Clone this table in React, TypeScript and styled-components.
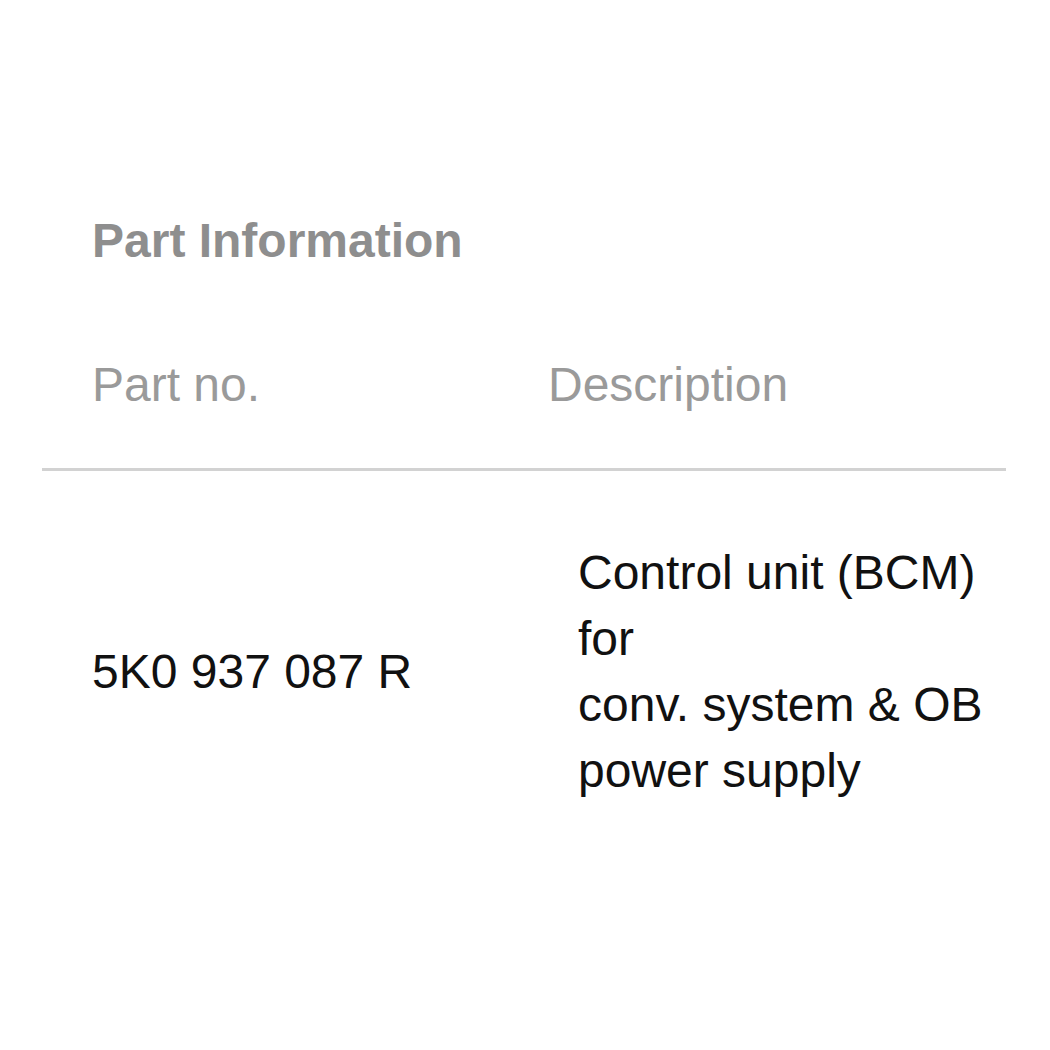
import styled, { createGlobalStyle } from 'styled-components';

const GlobalStyle = createGlobalStyle`
  html, body {
    margin: 0;
    padding: 0;
    background: #fff;
  }
  body {
    font-family: 'Liberation Sans', Arial, sans-serif;
  }
`;

/* ---- layout ---- */

const Page = styled.div`
  width: 1050px;
  height: 1050px;
  box-sizing: border-box;
  padding: 208px 44px 0 42px;
  background: #fff;
`;

const Title = styled.h2`
  margin: 0 0 78px;
  padding-left: 50px;
  font-size: 48px;
  line-height: 66px;
  font-weight: 700;
  color: #8e8e8e;
`;

const Row = styled.div<{ $col: number }>`
  display: grid;
  grid-template-columns: ${({ $col }) => $col}px 1fr;
  align-items: center;
  padding-left: 50px;
  font-size: 48px;
  line-height: 66px;
`;

const HeadRow = styled(Row)`
  padding-bottom: 50px;
  border-bottom: 3px solid #d2d2d2;
  color: #9a9a9a;
`;

const BodyRow = styled(Row)`
  padding-top: 69px;
  color: #111;
`;

const Cell = styled.div<{ $width?: number }>`
  max-width: ${({ $width }) => ($width ? `${$width}px` : 'none')};
`;

const rows = [
  {
    partNo: '5K0 937 087 R',
    desc: ['Control unit (BCM)', 'for', 'conv. system & OB', 'power supply'],
  },
];

const App = () => {
  return (
    <>
      <GlobalStyle />
      <Page>
        <Title>Part Information</Title>
        <HeadRow $col={456}>
          <Cell>Part no.</Cell>
          <Cell>Description</Cell>
        </HeadRow>
        {rows.map((r) => (
          <BodyRow $col={486} key={r.partNo}>
            <Cell>{r.partNo}</Cell>
            <Cell $width={428}>
              {r.desc.map((line, i) => (
                <div key={i}>{line}</div>
              ))}
            </Cell>
          </BodyRow>
        ))}
      </Page>
    </>
  );
};

export default App;
